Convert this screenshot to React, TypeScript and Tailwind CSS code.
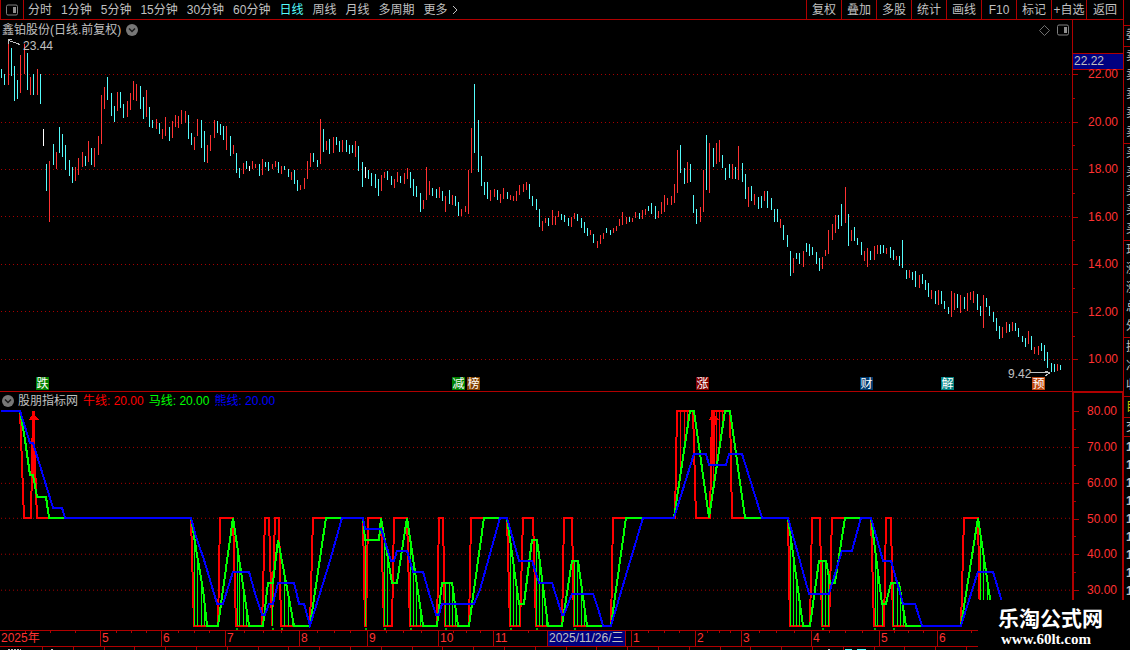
import React from "react";

type Point = [number, number];
type Bar = [number, number, number, number];

const periods = [
  "分时",
  "1分钟",
  "5分钟",
  "15分钟",
  "30分钟",
  "60分钟",
  "日线",
  "周线",
  "月线",
  "多周期",
];
const tools = ["复权", "叠加", "多股", "统计", "画线", "F10", "标记", "+自选", "返回"];

// x, high, low, direction: 0 = down, 1 = up, 2 = flat
const bars: Bar[] = [
  [1, 69, 78, 0], [4, 74, 85, 0], [8, 43, 85, 1], [11, 48, 76, 0], [14, 66, 101, 0], [17, 80, 99, 0],
  [20, 55, 93, 1], [24, 44, 74, 1], [27, 53, 90, 0], [30, 77, 95, 1], [33, 74, 95, 0], [37, 69, 95, 1],
  [40, 74, 104, 0], [43, 129, 146, 2], [46, 164, 191, 0], [49, 161, 222, 1], [53, 144, 165, 0], [56, 152, 169, 1],
  [59, 127, 153, 0], [62, 134, 157, 0], [65, 145, 170, 0], [69, 160, 176, 0], [72, 167, 183, 0], [75, 167, 181, 1],
  [78, 158, 175, 1], [82, 152, 167, 1], [85, 156, 166, 0], [88, 141, 162, 1], [91, 148, 165, 0], [94, 148, 167, 1],
  [98, 136, 155, 1], [101, 95, 144, 1], [104, 87, 109, 1], [107, 77, 100, 0], [111, 93, 116, 0], [114, 106, 122, 0],
  [117, 92, 111, 1], [120, 92, 108, 0], [123, 104, 118, 0], [127, 101, 117, 1], [130, 93, 110, 1], [133, 81, 100, 1],
  [136, 84, 101, 1], [140, 86, 109, 0], [143, 97, 119, 0], [146, 90, 117, 1], [149, 107, 127, 0], [152, 120, 128, 0],
  [156, 119, 129, 1], [159, 123, 134, 0], [162, 129, 139, 1], [165, 117, 136, 1], [169, 127, 141, 0], [172, 121, 138, 1],
  [175, 115, 127, 1], [178, 116, 128, 1], [181, 110, 124, 1], [185, 111, 123, 1], [188, 115, 139, 0], [191, 133, 145, 0],
  [194, 137, 150, 1], [197, 119, 136, 1], [201, 120, 148, 0], [204, 131, 162, 0], [207, 145, 163, 1], [210, 135, 151, 1],
  [214, 120, 138, 1], [217, 121, 133, 0], [220, 124, 135, 0], [223, 126, 140, 0], [226, 126, 150, 1], [230, 136, 156, 0],
  [233, 145, 154, 1], [236, 153, 173, 0], [239, 168, 178, 0], [243, 163, 174, 1], [246, 161, 169, 0], [249, 166, 171, 2],
  [252, 161, 169, 1], [255, 164, 168, 1], [259, 164, 176, 0], [262, 159, 175, 1], [265, 162, 167, 0], [268, 162, 171, 0],
  [272, 164, 169, 1], [275, 161, 167, 1], [278, 162, 173, 0], [281, 166, 174, 1], [284, 166, 170, 0], [288, 169, 177, 0],
  [291, 172, 180, 1], [294, 170, 184, 0], [297, 180, 191, 0], [300, 185, 190, 1], [304, 178, 189, 1], [307, 161, 179, 1],
  [310, 153, 167, 1], [313, 153, 162, 0], [317, 160, 167, 0], [320, 119, 164, 1], [323, 129, 152, 0], [326, 141, 150, 1],
  [329, 139, 154, 0], [333, 137, 153, 1], [336, 137, 145, 0], [339, 141, 152, 0], [342, 140, 152, 1], [346, 140, 152, 0],
  [349, 145, 154, 0], [352, 145, 153, 0], [355, 141, 157, 1], [358, 146, 171, 0], [362, 162, 187, 0], [365, 167, 178, 2],
  [368, 170, 179, 0], [371, 173, 186, 0], [375, 174, 188, 0], [378, 179, 196, 0], [381, 175, 191, 1], [384, 172, 178, 1],
  [387, 171, 180, 0], [391, 176, 185, 0], [394, 179, 188, 1], [397, 172, 182, 1], [400, 176, 183, 0], [404, 173, 184, 1],
  [407, 168, 179, 1], [410, 172, 188, 0], [413, 179, 196, 0], [416, 186, 197, 0], [420, 193, 212, 0], [423, 200, 209, 1],
  [426, 167, 200, 1], [429, 181, 195, 1], [432, 188, 196, 0], [436, 189, 198, 0], [439, 187, 198, 1], [442, 191, 201, 0],
  [445, 196, 212, 1], [449, 190, 204, 0], [452, 195, 205, 1], [455, 196, 206, 0], [458, 202, 216, 0], [461, 209, 216, 1],
  [465, 206, 212, 1], [468, 170, 214, 1], [471, 128, 173, 1], [474, 84, 153, 0], [478, 120, 172, 0], [481, 156, 186, 0],
  [484, 182, 195, 0], [487, 182, 199, 0], [490, 190, 201, 1], [494, 189, 197, 1], [497, 190, 200, 0], [500, 194, 203, 1],
  [503, 188, 199, 1], [507, 192, 199, 0], [510, 195, 200, 1], [513, 196, 201, 1], [516, 191, 201, 1], [519, 185, 195, 1],
  [523, 184, 192, 1], [526, 182, 190, 1], [529, 184, 199, 0], [532, 196, 206, 0], [536, 199, 210, 0], [539, 209, 227, 0],
  [542, 221, 231, 1], [545, 218, 223, 1], [548, 218, 226, 0], [552, 210, 225, 1], [555, 216, 225, 1], [558, 211, 217, 1],
  [561, 214, 220, 0], [564, 215, 222, 0], [568, 218, 226, 0], [571, 217, 227, 1], [574, 213, 219, 1], [577, 214, 221, 0],
  [581, 218, 228, 0], [584, 222, 233, 0], [587, 228, 236, 0], [590, 230, 235, 1], [593, 234, 243, 0], [597, 241, 248, 1],
  [600, 235, 244, 1], [603, 233, 239, 1], [606, 228, 233, 0], [610, 230, 235, 0], [613, 228, 233, 1], [616, 226, 231, 1],
  [619, 219, 226, 1], [622, 212, 225, 1], [626, 217, 224, 1], [629, 217, 222, 0], [632, 218, 222, 1], [635, 212, 218, 1],
  [639, 213, 219, 0], [642, 210, 219, 1], [645, 209, 215, 1], [648, 206, 211, 0], [651, 203, 214, 0], [655, 206, 219, 0],
  [658, 211, 218, 1], [661, 202, 214, 1], [664, 195, 212, 1], [667, 198, 205, 1], [671, 196, 205, 1], [674, 184, 203, 1],
  [677, 150, 193, 1], [680, 145, 173, 0], [684, 168, 184, 0], [687, 162, 183, 1], [690, 164, 182, 0], [693, 195, 213, 0],
  [696, 209, 224, 0], [700, 207, 222, 1], [703, 170, 212, 1], [706, 135, 190, 0], [709, 143, 193, 1], [713, 148, 167, 0],
  [716, 143, 164, 1], [719, 140, 162, 1], [722, 155, 168, 0], [725, 168, 180, 0], [729, 164, 178, 0], [732, 164, 179, 1],
  [735, 167, 179, 0], [738, 146, 180, 1], [742, 163, 182, 0], [745, 174, 199, 0], [748, 187, 207, 1], [751, 186, 201, 0],
  [754, 194, 205, 1], [758, 197, 209, 0], [761, 196, 208, 0], [764, 191, 201, 1], [767, 191, 208, 0], [771, 198, 210, 0],
  [774, 209, 222, 0], [777, 209, 222, 0], [780, 219, 228, 1], [783, 225, 240, 0], [787, 235, 247, 0], [790, 251, 276, 0],
  [793, 258, 273, 1], [796, 253, 259, 0], [799, 253, 264, 0], [803, 251, 267, 1], [806, 243, 252, 0], [809, 244, 256, 0],
  [812, 247, 255, 0], [816, 252, 264, 0], [819, 258, 271, 0], [822, 257, 269, 1], [825, 250, 256, 1], [828, 230, 254, 1],
  [832, 224, 240, 1], [835, 215, 233, 1], [838, 215, 229, 0], [841, 204, 226, 0], [845, 187, 223, 1], [848, 214, 246, 0],
  [851, 230, 241, 1], [854, 227, 241, 0], [857, 238, 245, 0], [861, 242, 255, 0], [864, 251, 261, 1], [867, 248, 267, 1],
  [870, 251, 260, 0], [874, 246, 260, 1], [877, 245, 254, 1], [880, 245, 254, 0], [883, 245, 253, 0], [886, 248, 254, 1],
  [890, 247, 258, 0], [893, 250, 260, 0], [896, 256, 260, 1], [899, 256, 266, 0], [902, 240, 268, 0], [906, 270, 279, 0],
  [909, 270, 278, 1], [912, 272, 280, 0], [915, 271, 287, 0], [919, 275, 288, 1], [922, 274, 284, 0], [925, 280, 290, 0],
  [928, 283, 297, 0], [931, 290, 299, 1], [935, 291, 304, 0], [938, 290, 305, 1], [941, 291, 304, 0], [944, 301, 309, 0],
  [948, 307, 314, 0], [951, 291, 317, 1], [954, 293, 310, 1], [957, 294, 308, 0], [960, 295, 313, 1], [964, 297, 309, 0],
  [967, 293, 311, 1], [970, 292, 300, 1], [973, 291, 303, 1], [977, 294, 310, 0], [980, 306, 316, 0], [983, 295, 328, 1],
  [986, 298, 307, 0], [989, 306, 316, 0], [993, 312, 322, 0], [996, 318, 331, 0], [999, 326, 339, 0], [1002, 327, 338, 1],
  [1006, 322, 333, 1], [1009, 324, 332, 0], [1012, 322, 331, 1], [1015, 323, 331, 0], [1018, 328, 337, 0], [1022, 336, 342, 0],
  [1025, 338, 347, 0], [1028, 331, 344, 1], [1031, 336, 350, 0], [1034, 347, 354, 1], [1038, 346, 355, 1], [1041, 343, 351, 0],
  [1044, 345, 361, 0], [1047, 352, 368, 0], [1051, 363, 372, 0], [1054, 364, 372, 0], [1057, 364, 371, 1], [1060, 365, 370, 0],
];
const barColors = ["#54fcfc", "#ff3232", "#ffffff"];

const bull: Point[] = [
  [1, 411], [20, 411], [24, 518], [31, 518], [33, 412], [37, 518], [191, 518], [194, 626], [218, 626],
  [220, 518], [233, 518], [236, 626], [262, 626], [265, 518], [269, 518], [272, 626], [275, 518], [279, 518],
  [281, 626], [310, 626], [313, 518], [363, 518], [365, 626], [366, 626], [368, 518], [381, 518], [384, 626],
  [392, 626], [394, 518], [407, 518], [410, 626], [437, 626], [439, 518], [443, 518], [445, 626], [469, 626],
  [471, 518], [507, 518], [510, 626], [520, 626], [523, 518], [533, 518], [536, 626], [562, 626], [564, 518],
  [572, 518], [574, 626], [611, 626], [613, 518], [675, 518], [677, 411], [693, 411], [696, 518], [710, 518],
  [712, 411], [730, 411], [732, 518], [788, 518], [790, 626], [810, 626], [812, 518], [820, 518], [822, 626],
  [829, 626], [832, 518], [871, 518], [874, 626], [884, 626], [886, 518], [891, 518], [893, 626], [961, 626],
  [964, 518], [978, 518], [980, 626],
];

const horse: Point[] = [
  [1, 411], [20, 411], [25, 440], [30, 475], [33, 475], [37, 497], [46, 497], [49, 518], [191, 518], [197, 555],
  [203, 590], [207, 626], [218, 626], [233, 518], [249, 626], [263, 626], [268, 583], [273, 583], [278, 540],
  [294, 626], [310, 626], [326, 518], [363, 518], [365, 540], [379, 540], [381, 518], [392, 583], [397, 583],
  [407, 518], [423, 626], [437, 626], [442, 583], [452, 583], [458, 626], [469, 626], [484, 518], [507, 518],
  [519, 604], [524, 604], [532, 540], [537, 540], [548, 626], [562, 626], [572, 561], [578, 561], [587, 626],
  [611, 626], [626, 518], [674, 518], [690, 411], [694, 411], [709, 518], [725, 411], [730, 411], [745, 518],
  [788, 518], [803, 626], [810, 626], [819, 561], [826, 561], [830, 583], [835, 583], [845, 518], [871, 518],
  [882, 604], [886, 604], [891, 583], [899, 583], [906, 626], [961, 626], [978, 518], [994, 626],
];

const bear: Point[] = [
  [1, 411], [20, 411], [30, 443], [33, 443], [53, 508], [62, 508], [65, 518], [191, 518], [196, 537], [204, 560],
  [217, 604], [223, 604], [233, 572], [249, 572], [256, 597], [262, 615], [265, 615], [269, 604], [273, 604],
  [278, 583], [294, 583], [299, 604], [304, 604], [310, 626], [330, 561], [342, 518], [363, 518], [365, 529],
  [381, 529], [391, 561], [394, 561], [397, 551], [407, 551], [413, 572], [423, 572], [430, 597], [436, 615],
  [439, 615], [442, 604], [474, 604], [480, 590], [500, 518], [507, 518], [519, 561], [532, 561], [539, 583],
  [552, 583], [562, 615], [564, 615], [572, 594], [593, 594], [599, 612], [603, 626], [611, 626], [643, 518],
  [674, 518], [694, 454], [706, 454], [709, 465], [726, 465], [729, 454], [742, 454], [762, 518], [788, 518],
  [809, 594], [829, 594], [842, 551], [852, 551], [861, 518], [871, 518], [883, 561], [891, 561], [903, 604],
  [915, 604], [922, 626], [961, 626], [978, 572], [993, 572], [1009, 626],
];

const greenDrops = [
  194, 197, 201, 204, 237, 239, 243, 246, 272, 284, 288, 292, 365, 384, 387, 410, 413, 416, 420, 445, 449, 452,
  455, 510, 513, 516, 519, 536, 539, 542, 546, 574, 577, 581, 584, 790, 793, 796, 799, 822, 825, 828, 875, 877,
  882, 893, 897, 900, 903, 980, 983, 987,
];
const redDrops = [680, 684, 687, 713, 716, 719, 722];
const dots = [236, 272, 281, 365, 384, 410, 445, 510, 536, 574, 822, 874, 893];

const flags = [
  { x: 36, text: "跌", color: "bg-[#008000]" },
  { x: 452, text: "减", color: "bg-[#008000]" },
  { x: 467, text: "榜", color: "bg-[#804000]" },
  { x: 696, text: "涨", color: "bg-[#800000]" },
  { x: 860, text: "财", color: "bg-[#003a6e]" },
  { x: 941, text: "解", color: "bg-[#008080]" },
  { x: 1032, text: "预", color: "bg-[#c04810]" },
];

const months = [
  { label: "2025年", from: 0, to: 100 },
  { label: "5", from: 100, to: 161 },
  { label: "6", from: 161, to: 225 },
  { label: "7", from: 225, to: 299 },
  { label: "8", from: 299, to: 367 },
  { label: "9", from: 367, to: 438 },
  { label: "10", from: 438, to: 493 },
  { label: "11", from: 493, to: 631 },
  { label: "1", from: 631, to: 695 },
  { label: "2", from: 695, to: 741 },
  { label: "3", from: 741, to: 811 },
  { label: "4", from: 811, to: 879 },
  { label: "5", from: 879, to: 937 },
  { label: "6", from: 937, to: 1072 },
];

const WIDTH = 1072;
const pct = (x: number) => `${(x / WIDTH) * 100}%`;
const toPoints = (pts: Point[]) => pts.map((p) => p.join(",")).join(" ");

// height of a line at x, between its two nearest points
const valueAt = (pts: Point[], x: number) => {
  for (let i = 1; i < pts.length; i++) {
    const [x0, y0] = pts[i - 1];
    const [x1, y1] = pts[i];
    if (x <= x1) return y0 + ((y1 - y0) * (x - x0)) / (x1 - x0);
  }
  return pts[pts.length - 1][1];
};

const PanelIcon = () => (
  <svg width="12" height="12" viewBox="0 0 12 12" className="shrink-0">
    <rect x="0.5" y="1" width="11" height="10" rx="1.5" fill="none" stroke="#808080" />
    <rect x="7" y="3" width="3" height="6" fill="#909090" />
  </svg>
);

const RoundChevron = () => (
  <svg width="12" height="12" viewBox="0 0 12 12" className="shrink-0">
    <circle cx="6" cy="6" r="6" fill="#777777" />
    <path d="M3 4.5 L6 7.5 L9 4.5" fill="none" stroke="#1a1a1a" strokeWidth="1.5" />
  </svg>
);

const GridLines = ({ rows }: { rows: number[] }) => (
  <>
    {rows.map((y) => (
      <line key={y} x1="1" x2={WIDTH} y1={y + 0.5} y2={y + 0.5} stroke="#a80000" strokeDasharray="1 3" />
    ))}
  </>
);

// every second entry is a minor tick without a number
const AxisTicks = ({ labels }: { labels: string[] }) => (
  <>
    {labels.map((label, i) => (
      <div key={i} className="flex h-[9px] items-center justify-between pr-[5px] leading-[9px]">
        <i className={label ? "h-px w-[5px] bg-[#b00000]" : "h-px w-[2px] bg-[#b00000]"} />
        {label && <span>{label}</span>}
      </div>
    ))}
  </>
);

const Toolbar = () => (
  <header className="flex h-5 shrink-0 items-stretch justify-between border-b border-[#b00000]">
    <nav className="flex items-stretch whitespace-nowrap">
      <button aria-label="侧栏" className="flex w-6 items-center justify-center border-x border-[#b00000]">
        <PanelIcon />
      </button>
      <div className="flex items-center gap-[9px] pl-1">
        {periods.map((p) => (
          <button key={p} className={p === "日线" ? "text-[#54fcfc]" : ""}>
            {p}
          </button>
        ))}
        <button className="flex items-center gap-1">
          更多
          <svg width="6" height="10" viewBox="0 0 6 10">
            <path d="M1 1 L5 5 L1 9" fill="none" stroke="#c0c0c0" />
          </svg>
        </button>
      </div>
    </nav>
    <div className="flex whitespace-nowrap">
      {tools.map((t) => (
        <button key={t} className="w-[35px] border-l border-[#b00000] text-center last:w-[37px]">
          {t}
        </button>
      ))}
    </div>
  </header>
);

const PricePanel = () => (
  <section className="flex min-h-0 flex-[372_1_0%] border-b border-[#b00000]">
    <div className="relative min-w-0 flex-1">
      <svg
        className="absolute inset-0 h-full w-full"
        viewBox="0 20 1072 371"
        preserveAspectRatio="none"
        shapeRendering="crispEdges"
      >
        <GridLines rows={[74, 122, 169, 216, 264, 311, 359]} />
        {bars.map(([x, high, low, dir]) => (
          <rect key={x} x={x} y={high} width="1" height={low - high} fill={barColors[dir]} />
        ))}
        <path d="M20 44.5 L8.5 40.5 M8.5 44 V39.5 H12" fill="none" stroke="#c0c0c0" />
        <path d="M1030 372.5 H1050 M1045 370.5 L1050 372.5 L1045 375.5" fill="none" stroke="#c0c0c0" />
      </svg>
      <div className="relative flex h-5 items-center justify-between pl-[2px] pr-[3px]">
        <div className="flex items-center gap-[5px]">
          <h1>鑫铂股份(日线.前复权)</h1>
          <button aria-label="展开">
            <RoundChevron />
          </button>
        </div>
        <div className="flex items-center gap-[7px]">
          <svg width="11" height="11" viewBox="0 0 11 11">
            <path d="M5.5 0.5 L10.5 5.5 L5.5 10.5 L0.5 5.5 Z" fill="none" stroke="#707070" />
          </svg>
          <PanelIcon />
        </div>
      </div>
      <span className="absolute top-5 leading-3" style={{ left: pct(23) }}>
        23.44
      </span>
      <span className="absolute bottom-[11px] leading-3" style={{ left: pct(1008) }}>
        9.42
      </span>
      {flags.map((f) => (
        <span
          key={f.x}
          className={`absolute bottom-px flex h-[13px] w-[13px] items-center justify-center leading-3 text-white ${f.color}`}
          style={{ left: pct(f.x) }}
        >
          {f.text}
        </span>
      ))}
    </div>
    <div className="flex w-[51px] shrink-0 flex-col border-l border-[#b00000] pt-[33px] pb-[27px] text-[#ff3232]">
      <div className="h-[17px] border-y border-[#b00000] bg-[#000080] pl-px leading-[15px] text-[#c0c0c0]">22.22</div>
      <div className="flex flex-1 flex-col justify-between">
        <AxisTicks
          labels={["22.00", "", "20.00", "", "18.00", "", "16.00", "", "14.00", "", "12.00", "", "10.00"]}
        />
      </div>
    </div>
  </section>
);

const IndicatorPanel = () => (
  <section className="flex min-h-0 flex-[238_1_0%]">
    <div className="relative min-w-0 flex-1">
      <svg
        className="absolute inset-0 h-full w-full"
        viewBox="0 392 1072 238"
        preserveAspectRatio="none"
        shapeRendering="crispEdges"
      >
        <GridLines rows={[447, 483, 518, 554, 590]} />
        {redDrops.map((x) => (
          <rect key={x} x={x} y="411" width="1" height={valueAt(horse, x) - 411} fill="#ff0000" />
        ))}
        <polyline points={toPoints(bull)} fill="none" stroke="#ff0000" strokeWidth="2" />
        {/* buy signals */}
        <path d="M32 411 H35 V415 L39 420 H35 V475 H32 V420 H29 L32 415 Z" fill="#ff0000" />
        <path d="M712 411 H715 V415 L719 420 H716 V425 H715 V465 H712 V420 H709 L712 415 Z" fill="#ff0000" />
        <polyline points={toPoints(horse)} fill="none" stroke="#00ff00" strokeWidth="2" />
        {greenDrops.map((x) => (
          <rect key={x} x={x} y={valueAt(horse, x)} width="1" height={626 - valueAt(horse, x)} fill="#00ff00" />
        ))}
        <polyline points={toPoints(bear)} fill="none" stroke="#0000ff" strokeWidth="2" />
        {dots.map((x) => (
          <rect key={x} x={x} y="628" width="2" height="2" fill="#00b000" />
        ))}
      </svg>
      <div className="relative flex h-[17px] items-center gap-[5px] pl-[2px]">
        <div className="flex items-center gap-1">
          <button aria-label="展开指标">
            <RoundChevron />
          </button>
          <h2>股朋指标网</h2>
        </div>
        <span className="text-[#ff0000]">牛线: 20.00</span>
        <span className="text-[#00ff00]">马线: 20.00</span>
        <span className="text-[#0000ff]">熊线: 20.00</span>
      </div>
    </div>
    <div className="flex w-[51px] shrink-0 flex-col justify-between border-t border-r border-l-2 border-[#b00000] pt-[14px] pb-[35px] text-[#ff3232]">
      <AxisTicks labels={["80.00", "", "70.00", "", "60.00", "", "50.00", "", "40.00", "", "30.00"]} />
    </div>
  </section>
);

const TimeAxis = () => (
  <footer className="shrink-0">
    <div className="flex h-[17px] border-y border-[#b00000] pr-[51px] text-[#ff3232]">
      <div className="relative flex flex-1">
        {months.map((m) => (
          <div
            key={m.from}
            className="flex shrink-0 justify-between border-l border-[#b00000] pl-px leading-[15px] first:border-l-0"
            style={{ width: pct(m.to - m.from) }}
          >
            <span className="w-0 whitespace-nowrap">{m.label}</span>
            <i className="h-[2px] w-px bg-[#b00000]" />
            <i className="h-[2px] w-px bg-[#b00000]" />
            <i className="h-[2px] w-px bg-[#b00000]" />
            <i className="w-0" />
          </div>
        ))}
        <span
          className="absolute top-0 h-[15px] border-x border-[#b00000] bg-[#000080] pr-px pl-px leading-[15px] whitespace-nowrap text-[#c0c0c0]"
          style={{ left: pct(547) }}
        >
          2025/11/26/三
        </span>
      </div>
    </div>
    <svg className="block h-[3px] w-full" viewBox="0 0 1123 3" preserveAspectRatio="none" shapeRendering="crispEdges">
      {Array.from({ length: 35 }, (_, i) => (
        <rect key={i} x={Math.round(42 + i * 30.8)} y="0" width="1" height="3" fill="#b00000" />
      ))}
      <path d="M8 2.5 H21 M51 2.5 H53 M828 2.5 H830" stroke="#c0c0c0" strokeDasharray="2 1" />
      <path d="M845 2.5 H852 M857 2.5 H866" stroke="#54fcfc" />
    </svg>
  </footer>
);

const Group = ({ rows }: { rows: string[] }) => (
  <div className="flex flex-col border-t border-[#b00000] pb-px">
    {rows.map((r, i) => (
      <span key={i} className="h-[19px] leading-[19px]">
        {r}
      </span>
    ))}
  </div>
);

// the quote column runs off the right edge of the window
const QuoteStrip = () => (
  <aside className="w-[7px] shrink-0 overflow-hidden border-l border-[#b00000] pt-[25px] whitespace-nowrap">
    <div className="w-10 [&>*]:pl-[2px]">
      <Group rows={["委比"]} />
      <Group rows={["卖五", "卖四", "卖三", "卖二", "卖一"]} />
      <Group rows={["买一", "买二", "买三", "买四", "买五"]} />
      <Group rows={["现价", "涨跌", "涨幅", "总量", "外盘"]} />
      <Group rows={["换手", "净资", "收益"]} />
      <div className="h-[21px] border-t border-[#b00000] leading-5 text-[#c0c000]">目</div>
      <div className="h-[20px] border-y border-[#b00000] leading-[18px]">交</div>
      <div className="flex flex-col pt-px">
        {Array.from({ length: 9 }, (_, i) => (
          <span key={i} className="h-[18px] font-bold leading-[18px]">
            14
          </span>
        ))}
      </div>
    </div>
  </aside>
);

export default function App() {
  return (
    <main className="relative flex h-screen min-h-[650px] overflow-hidden bg-black font-['Liberation_Sans','Noto_Sans_CJK_SC',sans-serif] text-xs text-[#c0c0c0]">
      <div className="flex min-w-0 flex-1 flex-col">
        <Toolbar />
        <PricePanel />
        <IndicatorPanel />
        <TimeAxis />
      </div>
      <QuoteStrip />
      <div className="absolute right-0 bottom-0 flex h-[50px] w-[152px] flex-col bg-black pt-2 pl-5 font-bold whitespace-nowrap text-white">
        <span className="text-[21px] leading-[22px]">乐淘公式网</span>
        <span className="pl-[3px] font-['Liberation_Serif',serif] text-[15px] leading-[18px]">www.60lt.com</span>
      </div>
    </main>
  );
}
